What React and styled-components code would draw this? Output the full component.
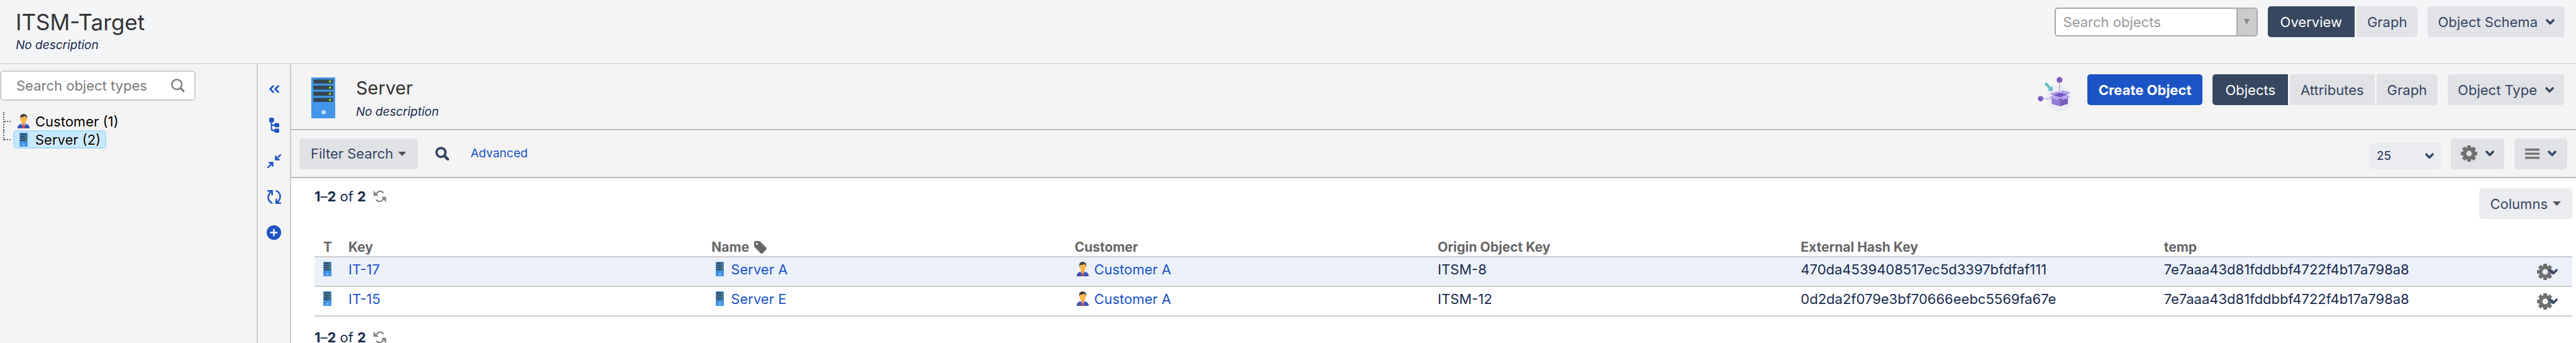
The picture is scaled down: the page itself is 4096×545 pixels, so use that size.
import React from "react";
import styled, { createGlobalStyle, css } from "styled-components";

const color = {
  text: "#172b4d",
  button: "#344563",
  link: "#1a53c8",
  grey: "#666666",
  line: "#cccccc",
  panel: "#f4f4f4",
};

const GlobalStyle = createGlobalStyle`
  *, *::before, *::after { box-sizing: border-box; }
  body {
    margin: 0;
    overflow: hidden;
    background: #ffffff;
    color: ${color.text};
    font-family: Inter, "Liberation Sans", sans-serif;
    font-size: 22px;
    line-height: 28px;
  }
  button, input, select { font: inherit; color: inherit; margin: 0; }
  a { color: ${color.link}; text-decoration: none; }
  svg { display: block; flex: none; }
`;

/* ---------- Page frame ---------- */

const Page = styled.div`
  display: flex;
  flex-direction: column;
  height: 100vh;
`;

const SchemaHeader = styled.header`
  display: flex;
  justify-content: space-between;
  align-items: flex-start;
  flex: none;
  height: 102px;
  padding: 10px 18px 0 25px;
  background: #f4f5f7;
  border-bottom: 2px solid #dddddd;
`;

const Body = styled.div`
  display: flex;
  flex: 1;
  min-height: 0;
`;

const Titles = styled.div`
  display: flex;
  flex-direction: column;
`;

const Title = styled.h1`
  margin: 0;
  font-size: 35px;
  line-height: 50px;
  font-weight: 400;
  color: #333333;
`;

const TypeTitle = styled.h2`
  margin: 0;
  font-size: 29px;
  line-height: 38px;
  font-weight: 400;
  color: #333333;
`;

const Description = styled.p`
  margin: 0;
  font-size: 19px;
  line-height: 24px;
  font-style: italic;
`;

/* ---------- Controls ---------- */

const Controls = styled.div`
  display: flex;
  align-items: ${(p) => p.$align || "center"};
  gap: 16px;
`;

const Button = styled.button`
  display: inline-flex;
  align-items: center;
  justify-content: center;
  gap: ${(p) => p.$gap || 13}px;
  height: 49px;
  padding: 0 ${(p) => p.$pad || 16}px;
  border: 0;
  border-radius: 5px;
  background: rgba(9, 30, 66, 0.08);
  color: ${color.button};
  white-space: nowrap;
  cursor: pointer;
  ${(p) =>
    p.$primary &&
    css`
      background: #1c54c5;
      color: #ffffff;
      font-weight: 700;
    `}
`;

const Segments = styled.div`
  display: flex;
  gap: 3px;
  ${Button} { border-radius: 0; }
  ${Button}:first-child { border-radius: 5px 0 0 5px; }
  ${Button}:last-child { border-radius: 0 5px 5px 0; }
`;

const Segment = styled(Button)`
  padding: 0 17px;
  ${(p) =>
    p.$active &&
    css`
      padding: 0 20px;
      background: #36475f;
      color: #ffffff;
    `}
`;

const Combo = styled.div`
  display: flex;
  width: 323px;
  height: 46px;
  border: 2px solid #aaaaaa;
  border-radius: 5px;
  background: #ffffff;
  overflow: hidden;
`;

const ComboInput = styled.input`
  flex: 1;
  min-width: 0;
  padding: 0 12px;
  border: 0;
  background: none;
  &::placeholder { color: #999999; opacity: 1; }
`;

const ComboToggle = styled.button`
  display: flex;
  align-items: center;
  justify-content: center;
  width: 32px;
  padding: 0;
  border: 0;
  border-left: 2px solid #aaaaaa;
  background: #cccccc;
`;

const SelectBox = styled.div`
  position: relative;
  width: 113px;
  height: 42px;
  select {
    width: 100%;
    height: 100%;
    padding: 0 11px;
    appearance: none;
    border: 0;
    border-radius: 5px;
    background: #ebecf0;
    font-size: 19px;
  }
  svg {
    position: absolute;
    right: 11px;
    top: 16px;
    pointer-events: none;
  }
`;

/* ---------- Sidebar ---------- */

const Sidebar = styled.aside`
  flex: none;
  width: 410px;
  padding-top: 10px;
  background: ${color.panel};
  border-right: 2px solid ${color.line};
`;

const TypeSearch = styled.label`
  display: flex;
  align-items: center;
  width: 311px;
  height: 48px;
  padding: 0 15px 0 24px;
  border: 2px solid ${color.line};
  border-radius: 6px;
  background: #ffffff;
  input {
    flex: 1;
    min-width: 0;
    padding: 0;
    border: 0;
    outline: 0;
    background: none;
  }
  input::placeholder { color: #7a7a7a; opacity: 1; }
`;

const Tree = styled.ul`
  margin: 18px 0 0;
  padding: 0 0 0 5px;
  list-style: none;
`;

const TreeRow = styled.li`
  display: flex;
  align-items: center;
  height: 29px;
`;

const Branch = styled.span`
  display: flex;
  align-items: ${(p) => (p.$last ? "flex-end" : "center")};
  align-self: ${(p) => (p.$last ? "flex-start" : "stretch")};
  width: 16px;
  height: ${(p) => (p.$last ? "16px" : "auto")};
  border-left: 2px dotted #666666;
  &::after {
    content: "";
    width: 10px;
    border-top: 2px dotted #666666;
  }
`;

const TreeLink = styled.a`
  display: flex;
  align-items: center;
  gap: 9px;
  height: 29px;
  padding: 0 7px 0 5px;
  border: 2px solid transparent;
  border-radius: 6px;
  color: #000000;
  line-height: 24px;
  text-shadow: 1px 1px 0 #ffffff;
  ${(p) =>
    p.$selected &&
    css`
      background: #c7e9fd;
      border-color: #a8dcf9;
    `}
`;

const Rail = styled.nav`
  display: flex;
  flex: none;
  flex-direction: column;
  align-items: center;
  width: 53px;
  padding-top: 11px;
  background: ${color.panel};
  border-right: 2px solid ${color.line};
`;

const RailButton = styled.button`
  display: flex;
  align-items: center;
  justify-content: center;
  width: 51px;
  height: 57px;
  padding: 0;
  border: 0;
  background: none;
  color: #1c54c5;
  cursor: pointer;
`;

/* ---------- Main ---------- */

const Main = styled.main`
  display: flex;
  flex: 1;
  flex-direction: column;
  min-width: 0;
`;

const TypeHeader = styled.div`
  display: flex;
  justify-content: space-between;
  align-items: flex-start;
  flex: none;
  height: 105px;
  padding: 16px 19px 0 32px;
  background: ${color.panel};
  border-bottom: 2px solid #bbbbbb;
`;

const TypeIdentity = styled.div`
  display: flex;
  align-items: center;
  gap: 33px;
  padding-top: 3px;
  ${Description} { margin-top: 7px; }
`;

const FilterBar = styled.div`
  display: flex;
  justify-content: space-between;
  align-items: center;
  flex: none;
  height: 76px;
  padding: 0 14px 0 13px;
  background: ${color.panel};
  border-bottom: 2px solid #bbbbbb;
`;

const FilterGroup = styled.div`
  display: flex;
  align-items: center;
  a {
    margin-left: 6px;
    font-size: 19px;
  }
`;

const IconButton = styled.button`
  padding: 0 ${(p) => p.$pad || 0}px;
  border: 0;
  background: none;
  color: ${color.button};
  cursor: pointer;
`;

const ArtSlot = styled.div`
  display: flex;
  padding: 4px 7px 0 0;
`;

const Results = styled.section`
  padding: 16px 6px 0 37px;
`;

const ResultsTop = styled.div`
  display: flex;
  justify-content: space-between;
  align-items: flex-start;
  height: 83px;
`;

const ColumnsButton = styled(Button)`
  background: #ebecf0;
`;

const Pager = styled.div`
  display: flex;
  align-items: center;
  gap: 12px;
  height: 26px;
`;

const Table = styled.table`
  width: 100%;
  table-layout: fixed;
  border-collapse: collapse;
  margin-bottom: 20px;
  th, td {
    padding: 0 0 0 14px;
    text-align: left;
    border-bottom: 2px solid ${color.line};
    white-space: nowrap;
  }
  th {
    height: 26px;
    padding-bottom: 4px;
    font-size: 21px;
    line-height: 20px;
    font-weight: 700;
    color: ${color.grey};
  }
  td {
    height: 47px;
    padding-bottom: 8px;
  }
  th:first-child, td:first-child { width: 40px; }
  th:last-child, td:last-child { width: 86px; }
`;

const Row = styled.tr`
  background: ${(p) => (p.$highlight ? "#ecf1f9" : "transparent")};
`;

const HeadLabel = styled.span`
  display: flex;
  align-items: center;
  gap: 8px;
`;

const Reference = styled.a`
  display: flex;
  align-items: center;
  gap: 5px;
`;

const IconSlot = styled.span`
  display: flex;
  justify-content: center;
  width: ${(p) => p.$width || 26}px;
`;

const RowMenu = styled.button`
  display: flex;
  align-items: center;
  margin: 8px 0 0 16px;
  padding: 0;
  border: 0;
  background: none;
  color: ${color.button};
  svg + svg { margin-left: -7px; }
`;

/* ---------- Icons ---------- */

const ServerIcon = ({ width, height }) => (
  <svg width={width} height={height} viewBox="0 0 46 80" preserveAspectRatio="none">
    <rect width="46" height="80" fill="#4396ea" />
    {[4, 16, 28, 40].map((y) => (
      <g key={y}>
        <rect x="4" y={y} width="38" height="8" fill="#37474f" />
        <rect x="34" y={y + 2} width="4" height="4" fill="#8bdc3c" />
      </g>
    ))}
    <circle cx="24" cy="68" r="4" fill="#c8dff8" />
  </svg>
);

const PersonIcon = () => (
  <svg width="19" height="23" viewBox="0 0 22 27" preserveAspectRatio="none">
    <path d="M0 27V25Q1 20 7 18.5L11 17L15 18.500Q21 20 22 25V27Z" fill="#3f51b5" />
    <path d="M7 18L11 27L15 18Z" fill="#c9cdf0" />
    <path d="M10 19H12L13.200 27H8.800Z" fill="#dd4b3e" />
    <path d="M8 13H14V18L11 20.500L8 18Z" fill="#f59a23" />
    <ellipse cx="11" cy="9" rx="6" ry="8" fill="#ffb74d" />
    <path d="M4.500 9Q3.500 0 11.500 0Q18.500 1 17.500 9L16 5.500L13 4Q10 6.500 6.500 6Z" fill="#424242" />
  </svg>
);

const Chevron = () => (
  <svg width="14" height="10" viewBox="0 0 14 10" fill="none" stroke={color.button} strokeWidth="3.5" strokeLinecap="round" strokeLinejoin="round">
    <path d="M2 2.200L7 7.400L12 2.200" />
  </svg>
);

const Caret = () => (
  <svg width="13" height="7" viewBox="0 0 13 7">
    <path d="M0 0H13L6.500 7Z" fill="#555555" />
  </svg>
);

const Gear = () => (
  <svg width="26" height="26" viewBox="0 0 26 26" fill="#707070">
    <circle cx="13" cy="13" r="7.200" fill="none" stroke="#707070" strokeWidth="5.600" />
    {[0, 45, 90, 135, 180, 225, 270, 315].map((a) => (
      <path key={a} d="M9.800 5L10.200 0H15.800L16.200 5Z" transform={`rotate(${a} 13 13)`} />
    ))}
  </svg>
);

const Lines = () => (
  <svg width="23" height="17" viewBox="0 0 23 17" fill="#777777">
    <rect y="0" width="23" height="3.500" rx="0.500" />
    <rect y="6.500" width="23" height="3.500" rx="0.500" />
    <rect y="13" width="23" height="3.500" rx="0.500" />
  </svg>
);

const Magnifier = ({ stroke, weight }) => (
  <svg width="22" height="22" viewBox="0 0 22 22" fill="none" stroke={stroke} strokeLinecap="round">
    <circle cx="9.200" cy="9.200" r={9 - weight / 2} strokeWidth={weight} />
    <path d="M15.500 15.500L20 20" strokeWidth={weight + 0.7} />
  </svg>
);

const Reload = () => (
  <svg width="20" height="20" viewBox="0 0 24 24" fill="#858585">
    <path d="M0 0.500V11H9.500L6.500 8Z" />
    <path d="M24 23.500V13H14.500L17.500 16Z" />
    <path d="M5 8Q8 2.200 12.500 2.200Q16.500 2.200 19 5.500M19 16Q16 21.800 11.500 21.800Q7.500 21.800 5 18.500" fill="none" stroke="#858585" strokeWidth="2.800" />
  </svg>
);

const Tag = () => (
  <svg width="20" height="20" viewBox="0 0 25 25">
    <path
      d="M0 3Q0 0 3 0H9Q11 0 12.500 1.200L23.500 12.500Q26 15 23.500 17.500L17.500 24Q15 26 12.800 24L1.500 12.500Q0 11 0 9ZM5.500 3.500A2 2 0 1 0 5.500 7.500A2 2 0 1 0 5.500 3.500Z"
      fill="#666666"
      fillRule="evenodd"
    />
  </svg>
);

const stroke = { fill: "none", stroke: "currentColor", strokeLinecap: "round", strokeLinejoin: "round" };

const DoubleLeft = () => (
  <svg width="16" height="13" viewBox="0 0 20 16" {...stroke} strokeWidth="3.500">
    <path d="M8 2L2 8L8 14M18 2L12 8L18 14" />
  </svg>
);

const Hierarchy = () => (
  <svg width="16" height="24" viewBox="0 0 20 30" fill="currentColor">
    <rect width="9.500" height="9.500" rx="2.500" />
    <rect x="10.500" y="10.500" width="9.500" height="8.500" rx="2.500" />
    <rect x="10.500" y="21.500" width="9.500" height="8.500" rx="2.500" />
    <path d="M4.500 8V22Q4.500 25.500 8 25.500H12M4.500 14.800H12" fill="none" stroke="currentColor" strokeWidth="2.700" />
  </svg>
);

const Collapse = () => (
  <svg width="22" height="22" viewBox="0 0 27 27" {...stroke} strokeWidth="3">
    <path d="M25.500 1.500L16.500 10.500M16.500 4V10.500H23M17 7V10H20" />
    <path d="M1.500 25.500L10.500 16.500M10.500 23V16.500H4M10 20V17H7" />
  </svg>
);

const Sync = () => (
  <svg width="22" height="22" viewBox="0 0 27 27" {...stroke} strokeWidth="3">
    <path d="M1.500 1.500H9.500V9M9 25.300C0 21 -1 9.500 8.500 2.500M7 2.500L9 5" />
    <path d="M25.500 25.500H17.500V18M18 1.700C27 6 28 17.500 18.500 24.500M20 24.500L18 22" />
  </svg>
);

const Plus = () => (
  <svg width="23" height="23" viewBox="0 0 28 28">
    <circle cx="14" cy="14" r="14" fill="currentColor" />
    <path d="M14 8V20M8 14H20" stroke="#ffffff" strokeWidth="2.800" strokeLinecap="round" />
  </svg>
);

const BoxArt = () => (
  <svg width="56" height="56" viewBox="56 64 206 206">
    <circle cx="184" cy="190" r="77" fill="#eeedf3" />
    <path d="M184 82V160M73 192H145" stroke="#a493d6" strokeWidth="4" />
    <circle cx="184" cy="82" r="17" fill="#7a5cc0" />
    <circle cx="73" cy="192" r="16" fill="#7a5cc0" />
    <path d="M107 96L134 125L143 116L145 148L113 145L122 136L95 106Z" fill="#62bfc9" />
    <path d="M138 180L186 190V237L138 222Z" fill="#8f7ad6" />
    <path d="M186 190L233 180V222L186 237Z" fill="#7858bd" />
    <path d="M144 170L186 156L229 169L186 186Z" fill="#7858bd" />
    <path d="M122 162L172 150L184 158L144 170Z" fill="#ac9ce6" />
    <path d="M186 157L201 143L246 156L229 170Z" fill="#ac9ce6" />
    <path d="M144 170L186 184L171 199L124 184Z" fill="#b5a7ec" />
    <path d="M186 184L229 170L247 184L204 199Z" fill="#b5a7ec" />
  </svg>
);

/* ---------- Data ---------- */

const objects = [
  { key: "IT-17", name: "Server A", customer: "Customer A", origin: "ITSM-8", hash: "470da4539408517ec5d3397bfdfaf111", temp: "7e7aaa43d81fddbbf4722f4b17a798a8" },
  { key: "IT-15", name: "Server E", customer: "Customer A", origin: "ITSM-12", hash: "0d2da2f079e3bf70666eebc5569fa67e", temp: "7e7aaa43d81fddbbf4722f4b17a798a8" },
];

const railActions = [
  ["Hide sidebar", DoubleLeft],
  ["Show hierarchy", Hierarchy],
  ["Collapse all", Collapse],
  ["Refresh", Sync],
  ["Create object type", Plus],
];

const ResultCount = () => (
  <Pager>
    <span>
      <b>1</b>–<b>2</b> of <b>2</b>
    </span>
    <IconButton aria-label="Reload results">
      <Reload />
    </IconButton>
  </Pager>
);

export default function App() {
  return (
    <Page>
      <GlobalStyle />
      <SchemaHeader>
        <Titles>
          <Title>ITSM-Target</Title>
          <Description>No description</Description>
        </Titles>
        <Controls>
          <Combo>
            <ComboInput aria-label="Search objects" placeholder="Search objects" />
            <ComboToggle aria-label="Open object list">
              <svg width="9" height="9" viewBox="0 0 9 9">
                <path d="M0 0H9L4.500 9Z" fill="#888888" />
              </svg>
            </ComboToggle>
          </Combo>
          <Segments>
            <Segment $active>Overview</Segment>
            <Segment>Graph</Segment>
          </Segments>
          <Button>
            Object Schema
            <Chevron />
          </Button>
        </Controls>
      </SchemaHeader>
      <Body>
        <Sidebar>
          <TypeSearch>
            <input aria-label="Search object types" placeholder="Search object types" />
            <Magnifier stroke="#777777" weight={2.3} />
          </TypeSearch>
          <Tree>
            <TreeRow>
              <Branch />
              <TreeLink href="#customer">
                <PersonIcon />
                Customer (1)
              </TreeLink>
            </TreeRow>
            <TreeRow>
              <Branch $last />
              <TreeLink href="#server" $selected>
                <IconSlot $width={19}>
                  <ServerIcon width={13} height={22} />
                </IconSlot>
                Server (2)
              </TreeLink>
            </TreeRow>
          </Tree>
        </Sidebar>
        <Rail>
          {railActions.map(([label, Icon]) => (
            <RailButton key={label} aria-label={label}>
              <Icon />
            </RailButton>
          ))}
        </Rail>
        <Main>
          <TypeHeader>
            <TypeIdentity>
              <ServerIcon width={38} height={65} />
              <Titles>
                <TypeTitle>Server</TypeTitle>
                <Description>No description</Description>
              </Titles>
            </TypeIdentity>
            <Controls $align="flex-start">
              <ArtSlot>
                <BoxArt />
              </ArtSlot>
              <Button $primary $pad={18}>
                Create Object
              </Button>
              <Segments>
                <Segment $active>Objects</Segment>
                <Segment>Attributes</Segment>
                <Segment>Graph</Segment>
              </Segments>
              <Button>
                Object Type
                <Chevron />
              </Button>
            </Controls>
          </TypeHeader>
          <FilterBar>
            <FilterGroup>
              <Button $gap={8} $pad={18}>
                Filter Search
                <Caret />
              </Button>
              <IconButton aria-label="Search" $pad={28}>
                <Magnifier stroke={color.button} weight={3.7} />
              </IconButton>
              <a href="#advanced">Advanced</a>
            </FilterGroup>
            <Controls $align="flex-end">
              <SelectBox>
                <select aria-label="Objects per page" defaultValue="25">
                  <option>25</option>
                </select>
                <Chevron />
              </SelectBox>
              <Button aria-label="Settings">
                <Gear />
                <Chevron />
              </Button>
              <Button aria-label="View" $pad={17}>
                <Lines />
                <Chevron />
              </Button>
            </Controls>
          </FilterBar>
          <Results>
            <ResultsTop>
              <ResultCount />
              <ColumnsButton $gap={8} $pad={18}>
                Columns
                <Caret />
              </ColumnsButton>
            </ResultsTop>
            <Table>
              <thead>
                <tr>
                  <th>T</th>
                  <th>Key</th>
                  <th>
                    <HeadLabel>
                      Name
                      <Tag />
                    </HeadLabel>
                  </th>
                  <th>Customer</th>
                  <th>Origin Object Key</th>
                  <th>External Hash Key</th>
                  <th>temp</th>
                  <th aria-label="Actions" />
                </tr>
              </thead>
              <tbody>
                {objects.map((o, i) => (
                  <Row key={o.key} $highlight={i === 0}>
                    <td>
                      <ServerIcon width={13} height={23} />
                    </td>
                    <td>
                      <a href={`#${o.key}`}>{o.key}</a>
                    </td>
                    <td>
                      <Reference href={`#${o.key}`}>
                        <IconSlot>
                          <ServerIcon width={13} height={23} />
                        </IconSlot>
                        {o.name}
                      </Reference>
                    </td>
                    <td>
                      <Reference href="#customer-a">
                        <IconSlot>
                          <PersonIcon />
                        </IconSlot>
                        {o.customer}
                      </Reference>
                    </td>
                    <td>{o.origin}</td>
                    <td>{o.hash}</td>
                    <td>{o.temp}</td>
                    <td>
                      <RowMenu aria-label={`Actions for ${o.key}`}>
                        <Gear />
                        <Chevron />
                      </RowMenu>
                    </td>
                  </Row>
                ))}
              </tbody>
            </Table>
            <ResultCount />
          </Results>
        </Main>
      </Body>
    </Page>
  );
}
